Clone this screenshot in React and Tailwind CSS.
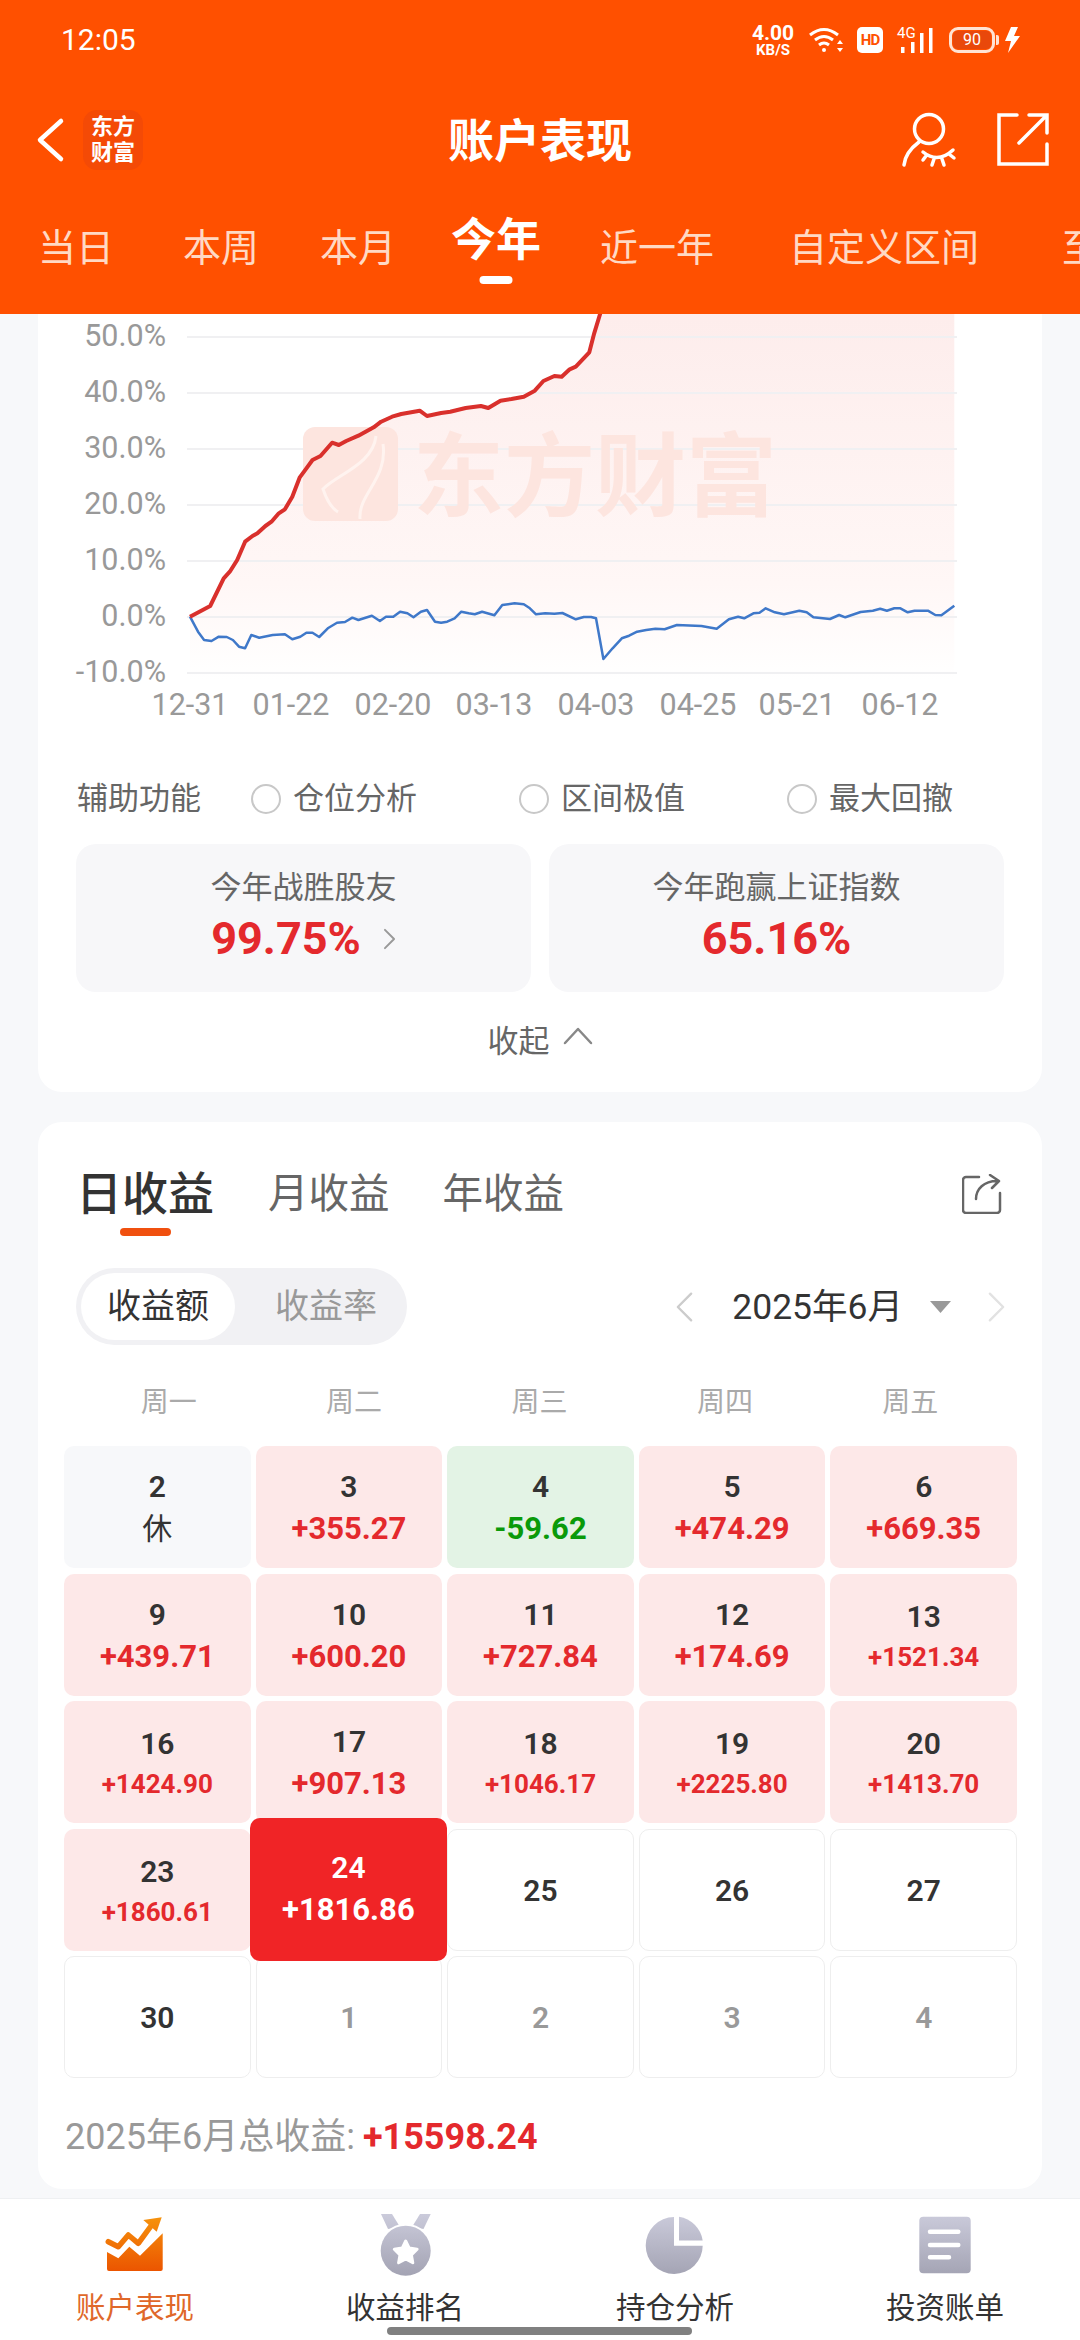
// App.jsx - 账户表现 page
const redPoints = [[245,950],[278,918],[300,835],[310,815],[322,780],[335,725],[347,708],[355,700],[368,678],[378,665],[390,640],[400,628],[412,590],[424,533],[435,505],[445,480],[458,468],[477,428],[488,435],[500,423],[520,407],[545,382],[557,365],[575,350],[590,342],[620,332],[632,348],[655,339],[670,335],[695,324],[720,318],[732,324],[752,302],[770,297],[790,290],[808,272],[822,243],[840,228],[852,230],[865,208],[875,200],[897,157],[905,100],[915,40],[922,-20]]
const bluePoints = [[245,950],[258,995],[268,1020],[280,1023],[292,1010],[305,1011],[315,1020],[325,1040],[335,1045],[345,1005],[358,1013],[380,1005],[400,1003],[412,1018],[425,1010],[435,998],[445,998],[456,1011],[470,985],[485,968],[498,966],[510,953],[520,960],[542,947],[555,963],[565,950],[577,950],[588,935],[600,940],[610,952],[622,935],[632,930],[645,965],[655,968],[665,965],[677,955],[688,935],[700,940],[710,943],[722,935],[742,946],[755,915],[775,910],[790,913],[800,925],[810,943],[825,940],[840,941],[853,939],[875,958],[888,951],[900,951],[908,955],[920,1077],[935,1045],[950,1015],[962,1007],[975,995],[990,990],[1005,986],[1020,988],[1040,975],[1080,978],[1105,986],[1125,958],[1140,950],[1150,955],[1165,940],[1175,938],[1185,925],[1200,937],[1215,943],[1240,932],[1252,937],[1263,952],[1290,957],[1305,945],[1315,952],[1340,936],[1360,932],[1372,926],[1383,932],[1395,925],[1405,925],[1417,937],[1428,932],[1450,932],[1462,945],[1472,946],[1493,917]]

function toChart(points) {
  return points.map(function (p) {
    return (2 + p[0] / 1.633).toFixed(1) + ',' + (p[1] / 3 - 14).toFixed(1)
  }).join(' ')
}

const yLabels = [['50.0%', 23], ['40.0%', 79], ['30.0%', 135], ['20.0%', 191], ['10.0%', 247], ['0.0%', 303], ['-10.0%', 359]]
const xLabels = [['12-31', 152], ['01-22', 253], ['02-20', 355], ['03-13', 456], ['04-03', 558], ['04-25', 660], ['05-21', 759], ['06-12', 862]]

const weeks = [
  [{ d: '2', rest: true }, { d: '3', v: '+355.27' }, { d: '4', v: '-59.62', down: true }, { d: '5', v: '+474.29' }, { d: '6', v: '+669.35' }],
  [{ d: '9', v: '+439.71' }, { d: '10', v: '+600.20' }, { d: '11', v: '+727.84' }, { d: '12', v: '+174.69' }, { d: '13', v: '+1521.34', small: true }],
  [{ d: '16', v: '+1424.90', small: true }, { d: '17', v: '+907.13' }, { d: '18', v: '+1046.17', small: true }, { d: '19', v: '+2225.80', small: true }, { d: '20', v: '+1413.70', small: true }],
  [{ d: '23', v: '+1860.61', small: true }, { d: '24', v: '+1816.86', today: true }, { d: '25' }, { d: '26' }, { d: '27' }],
  [{ d: '30' }, { d: '1', other: true }, { d: '2', other: true }, { d: '3', other: true }, { d: '4', other: true }],
]

function StatusBar() {
  return (
    <div className="h-[80px] pl-[61px] pr-[59px] flex items-center justify-between text-white">
      <span className="text-[30px] leading-none">12:05</span>
      <div className="flex items-center">
        <div className="w-[44px] flex flex-col items-center font-bold">
          <span className="text-[21px] leading-[20px]">4.00</span>
          <span className="text-[15px] leading-[14px]">KB/S</span>
        </div>
        <svg width="36" height="26" viewBox="0 0 36 26" fill="none" stroke="white" strokeWidth="3" className="ml-[14px]">
          <path d="M1 8Q15 -3 29 8M6 13Q15 6 24 13M10 18Q15 14 20 18" />
          <circle cx="15" cy="23" r="2" fill="white" stroke="none" />
          <path d="M28 17L31 13L34 17ZM28 21H34L31 25Z" fill="white" stroke="none" />
        </svg>
        <div className="ml-[12px] w-[26px] h-[26px] rounded-[5px] bg-white flex items-center justify-center text-[#ff5000] text-[15px] font-bold tracking-[-1px]">HD</div>
        <div className="relative ml-[14px] w-[38px] h-[26px]">
          <span className="absolute left-0 top-[-1px] text-[15px] leading-[15px]">4G</span>
          <svg width="38" height="26" viewBox="0 0 38 26" fill="white">
            <rect x="4" y="20" width="3.5" height="6" />
            <rect x="14" y="15" width="3.5" height="11" />
            <rect x="23" y="6" width="3.5" height="20" />
            <rect x="32" y="1" width="3.5" height="25" />
          </svg>
        </div>
        <div className="ml-[14px] w-[46px] h-[26px] rounded-[9px] border-[3px] border-[#ffe3d4] p-[1px]">
          <div className="h-full w-full rounded-[5px] bg-[#e9480b] flex items-center justify-center text-[16px] leading-none">90</div>
        </div>
        <div className="ml-[1px] w-[3px] h-[10px] rounded-r-[2px] bg-[#ffe3d4]"></div>
        <svg width="16" height="26" viewBox="0 0 16 26" fill="white" className="ml-[6px]">
          <polygon points="6,0 0,14 6,14 3,26 15,9 9,9 13,0" />
        </svg>
      </div>
    </div>
  )
}

function TitleBar() {
  return (
    <div className="h-[120px] grid grid-cols-[1fr_auto_1fr] items-center text-white">
      <div className="flex items-center pl-[36px]">
        <svg width="30" height="46" viewBox="0 0 30 46" fill="none" stroke="white" strokeWidth="4.5" strokeLinecap="round" strokeLinejoin="round">
          <path d="M25 4L4 23L25 42" />
        </svg>
        <div className="ml-[17px] w-[60px] h-[60px] rounded-[14px] bg-[#f44a06] flex items-center justify-center text-center text-[22px] leading-[26px] font-bold">
          东方<br />财富
        </div>
      </div>
      <div className="mt-[2px] text-[46px] leading-none font-bold">账户表现</div>
      <div className="flex items-center justify-end pr-[29px]">
        <svg width="58" height="60" viewBox="0 0 58 60" fill="none" stroke="white" strokeWidth="3.5" strokeLinecap="round">
          <circle cx="28" cy="19" r="14.5" />
          <path d="M3 55C4 45 10 38 18 32M22 42Q37 54 52 40M25 46L22 50M33 49L31 55M41 49L43 55M48 44L53 48" />
        </svg>
        <svg width="55" height="58" viewBox="0 0 55 58" fill="none" stroke="white" strokeWidth="3.5" strokeLinecap="round" className="ml-[37px]">
          <path d="M21 4H3V53H51V33M23 32L51 4M33 4H51V22" />
        </svg>
      </div>
    </div>
  )
}

function RangeTabs() {
  return (
    <div className="h-[96px] pl-[38px] flex items-center whitespace-nowrap overflow-hidden text-[38px] leading-none text-[#ffd9c4]">
      <span>当日</span>
      <span className="ml-[69px]">本周</span>
      <span className="ml-[61px]">本月</span>
      <span className="relative ml-[55px] mt-[-16px] text-[45px] font-bold text-white">
        今年
        <span className="absolute left-1/2 -translate-x-1/2 bottom-[-21px] w-[33px] h-[8px] rounded-full bg-white"></span>
      </span>
      <span className="ml-[59px]">近一年</span>
      <span className="ml-[75px]">自定义区间</span>
      <span className="ml-[83px]">至今</span>
    </div>
  )
}

function Chart() {
  return (
    <svg width="1004" height="416" viewBox="0 0 1004 416" className="block text-[30.5px]">
      <defs>
        <linearGradient id="areaFill" x1="0" y1="0" x2="0" y2="1">
          <stop offset="0" stopColor="#fdeceb" />
          <stop offset="0.75" stopColor="#fff7f6" />
          <stop offset="1" stopColor="#ffffff" />
        </linearGradient>
      </defs>
      <polygon points={toChart(redPoints) + ' ' + toChart([[1493, -20], [1493, 1140], [245, 1140]])} fill="url(#areaFill)" />
      {yLabels.map(function (l) {
        return <line key={l[0]} x1="149" x2="919" y1={l[1]} y2={l[1]} stroke="#f0f0f2" strokeWidth="2" />
      })}
      <rect x="265" y="113" width="95" height="94" rx="12" fill="#fde5df" />
      <path d="M338 122C335 150 300 160 285 175C290 190 295 195 300 198M345 130C350 165 320 180 322 205" fill="none" stroke="#fff3ef" strokeWidth="3" />
      <text x="375" y="195" className="fill-[#fde5df] text-[91px] font-bold">东方财富</text>
      <polyline points={toChart(bluePoints)} fill="none" stroke="#3f78c9" strokeWidth="2.5" strokeLinejoin="round" />
      <polyline points={toChart(redPoints)} fill="none" stroke="#d9302c" strokeWidth="4" strokeLinejoin="round" />
      {yLabels.map(function (l) {
        return <text key={l[0]} x="128" y={l[1] + 9} textAnchor="end" className="fill-[#999999]">{l[0]}</text>
      })}
      {xLabels.map(function (l) {
        return <text key={l[0]} x={l[1]} y="401" textAnchor="middle" className="fill-[#999999]">{l[0]}</text>
      })}
    </svg>
  )
}

function Radio(props) {
  return (
    <div className="w-[268px] flex items-center">
      <span className="w-[30px] h-[30px] rounded-full border-2 border-[#c8c8c8]"></span>
      <span className="ml-[12px]">{props.label}</span>
    </div>
  )
}

function Chevron(props) {
  return (
    <svg width={props.w} height={props.h} viewBox="0 0 20 32" fill="none" stroke={props.color} strokeWidth={props.sw} strokeLinejoin="round" strokeLinecap="round" className={props.className}>
      <path d={props.right ? 'M3 2L17 16L3 30' : 'M17 2L3 16L17 30'} />
    </svg>
  )
}

function ChartCard() {
  return (
    <div className="mx-[38px] h-[778px] bg-white rounded-b-[24px] overflow-hidden">
      <Chart />
      <div className="mt-[49px] h-[40px] pl-[39px] flex items-center text-[31px] leading-[40px] text-[#666666]">
        <span className="w-[174px]">辅助功能</span>
        <Radio label="仓位分析" />
        <Radio label="区间极值" />
        <div className="flex items-center">
          <span className="w-[30px] h-[30px] rounded-full border-2 border-[#c8c8c8]"></span>
          <span className="ml-[12px]">最大回撤</span>
        </div>
      </div>
      <div className="mt-[25px] px-[38px] grid grid-cols-2 gap-[18px]">
        <div className="h-[148px] pt-[23px] rounded-[20px] bg-[#f7f7f9] flex flex-col items-center">
          <div className="text-[31px] leading-[42px] text-[#666666]">今年战胜股友</div>
          <div className="mt-[5px] flex items-center">
            <span className="text-[45px] leading-[50px] font-bold text-[#e4292d]">99.75%</span>
            <Chevron right w="13" h="22" color="#999999" sw="3" className="ml-[22px]" />
          </div>
        </div>
        <div className="h-[148px] pt-[23px] rounded-[20px] bg-[#f7f7f9] flex flex-col items-center">
          <div className="text-[31px] leading-[42px] text-[#666666]">今年跑赢上证指数</div>
          <div className="mt-[5px] text-[45px] leading-[50px] font-bold text-[#e4292d]">65.16%</div>
        </div>
      </div>
      <div className="mt-[30px] h-[40px] flex items-center justify-center text-[31px] text-[#666666]">
        <span>收起</span>
        <svg width="30" height="20" viewBox="0 0 30 20" fill="none" stroke="#888888" strokeWidth="2.5" strokeLinecap="round" strokeLinejoin="round" className="ml-[13px] mt-[-12px]">
          <path d="M2 17L15 3L28 17" />
        </svg>
      </div>
    </div>
  )
}

function DayCell(props) {
  const c = props.cell
  if (c.today) {
    return (
      <div className="relative">
        <div className="absolute left-[-6px] right-[-5px] top-[-11px] bottom-[-10px] z-10 rounded-[10px] bg-[#f02426] flex flex-col items-center justify-center text-white font-bold">
          <span className="text-[30px] leading-[42px] font-semibold">{c.d}</span>
          <span className="text-[31px] leading-[42px]">{c.v}</span>
        </div>
      </div>
    )
  }
  let cellClass = 'border border-[#eeeeee] bg-white'
  if (c.rest) cellClass = 'bg-[#f7f8fa]'
  else if (c.down) cellClass = 'bg-[#e3f3e5]'
  else if (c.v) cellClass = 'bg-[#fde8e8]'
  return (
    <div className={'h-[122px] pt-[2px] rounded-[10px] flex flex-col items-center justify-center ' + cellClass}>
      <span className={'text-[30px] leading-[42px] font-semibold ' + (c.other ? 'text-[#999999]' : 'text-[#333333]')}>{c.d}</span>
      {c.rest && <span className="text-[30px] leading-[42px] text-[#333333]">休</span>}
      {c.v && (
        <span className={c.small
          ? 'text-[26px] leading-[38px] font-bold text-[#e4292d]'
          : 'text-[31px] leading-[42px] font-bold ' + (c.down ? 'text-[#0a9a0a]' : 'text-[#e4292d]')}>
          {c.v}
        </span>
      )}
    </div>
  )
}

function EarningsCard() {
  return (
    <div className="mx-[38px] mt-[30px] h-[1067px] bg-white rounded-[24px] overflow-hidden">
      <div className="mt-[50px] h-[44px] pl-[38px] pr-[37px] flex items-center">
        <span className="relative text-[46px] leading-none font-medium text-[#333333]">
          日收益
          <span className="absolute left-[44px] bottom-[-19px] w-[51px] h-[8px] rounded-full bg-[#f0500f]"></span>
        </span>
        <span className="ml-[54px] text-[40.5px] leading-none text-[#666666]">月收益</span>
        <span className="ml-[53px] text-[40.5px] leading-none text-[#666666]">年收益</span>
        <svg width="40" height="40" viewBox="0 0 40 40" fill="none" stroke="#666666" strokeWidth="2.5" strokeLinecap="round" strokeLinejoin="round" className="ml-auto mr-[3px]">
          <path d="M17 3H4A3 3 0 0 0 1 6V36A3 3 0 0 0 4 39H35A3 3 0 0 0 38 36V19M14 25C14 15 22 7 35 7M28 1L37 7L30 14" />
        </svg>
      </div>
      <div className="mt-[52px] pl-[38px] pr-[36px] flex items-center">
        <div className="w-[331px] h-[77px] p-[5px] rounded-full bg-[#f1f1f4] flex items-center text-[34px]">
          <div className="w-[154px] h-[67px] rounded-full bg-white flex items-center justify-center text-[#333333]">收益额</div>
          <span className="ml-[40px] text-[#999999]">收益率</span>
        </div>
        <Chevron w="19" h="32" color="#cccccc" sw="2.5" className="ml-auto" />
        <span className="ml-[38px] mt-[2px] text-[35.5px] leading-none text-[#333333]">2025年6月</span>
        <svg width="21" height="12" viewBox="0 0 21 12" fill="#999999" className="ml-[27px]">
          <polygon points="0,0 21,0 10.5,12" />
        </svg>
        <Chevron right w="19" h="32" color="#e2e2e2" sw="2.5" className="ml-[36px]" />
      </div>
      <div className="mt-[38px] ml-[38px] w-[927px] grid grid-cols-5 text-center text-[28px] leading-[40px] text-[#aaaaaa]">
        <span>周一</span>
        <span>周二</span>
        <span>周三</span>
        <span>周四</span>
        <span>周五</span>
      </div>
      <div className="mt-[23px] ml-[26px] w-[953px] grid grid-cols-5 gap-x-[5px] gap-y-[5.5px]">
        {weeks.map(function (week) {
          return week.map(function (cell) {
            return <DayCell key={cell.d + (cell.other ? 'o' : '')} cell={cell} />
          })
        })}
      </div>
      <div className="mt-[36px] pl-[27px] flex items-center h-[46px] text-[36px] text-[#999999]">
        <span>2025年6月总收益:</span>
        <span className="ml-[8px] text-[36px] font-bold text-[#e4292d]">+15598.24</span>
      </div>
    </div>
  )
}

function BottomNav() {
  return (
    <div className="relative mt-[9px] h-[142px] border-t border-[#eef0f2] bg-white grid grid-cols-4 pt-[13px] text-[29.5px] leading-[40px] text-[#333333]">
      <div className="flex flex-col items-center">
        <svg width="60" height="66" viewBox="0 0 60 66">
          <defs>
            <linearGradient id="navOrange2" gradientUnits="userSpaceOnUse" x1="0" y1="5" x2="0" y2="59">
              <stop offset="0" stopColor="#f6920c" />
              <stop offset="1" stopColor="#eb5500" />
            </linearGradient>
          </defs>
          <path d="M2 40L13.3 46.3L24.3 34.7L35 43.7L57.7 21.3V57A2 2 0 0 1 55.7 59H4A2 2 0 0 1 2 57Z" fill="url(#navOrange2)" />
          <polyline points="3.3,29.7 13.3,34.7 23.3,23 33.3,31.3 46.7,13" fill="none" stroke="url(#navOrange2)" strokeWidth="5.5" strokeLinejoin="round" strokeLinecap="round" />
          <polygon points="56.7,5.3 38.3,8 51.7,19.7" fill="url(#navOrange2)" />
        </svg>
        <span className="mt-[10px] text-[#e0682a]">账户表现</span>
      </div>
      <div className="flex flex-col items-center">
        <svg width="60" height="66" viewBox="0 0 60 66">
          <defs>
            <linearGradient id="navGrey" gradientUnits="userSpaceOnUse" x1="0" y1="2" x2="0" y2="64">
              <stop offset="0" stopColor="#cbcbdb" />
              <stop offset="1" stopColor="#a3a3b3" />
            </linearGradient>
          </defs>
          <polygon points="6,2 17,2 25,15 13,17" fill="url(#navGrey)" />
          <polygon points="55.7,2 45,2 37,15 48.5,17" fill="url(#navGrey)" />
          <circle cx="30.7" cy="38.7" r="27" fill="white" />
          <circle cx="30.7" cy="38.7" r="25" fill="url(#navGrey)" />
          <polygon points="30.7,29 34.2,36.1 42.1,37.3 36.4,42.9 37.8,50.7 30.7,47 23.6,50.7 25,42.9 19.3,37.3 27.2,36.1" fill="white" stroke="white" strokeWidth="3" strokeLinejoin="round" />
        </svg>
        <span className="mt-[10px]">收益排名</span>
      </div>
      <div className="flex flex-col items-center">
        <svg width="60" height="66" viewBox="0 0 60 66" fill="url(#navGrey)">
          <path d="M29 5V33.7H57.7A28.5 28.5 0 1 1 29 5Z" />
          <path d="M34 4.7A28.5 28.5 0 0 1 57.7 28.5H34Z" />
        </svg>
        <span className="mt-[10px]">持仓分析</span>
      </div>
      <div className="flex flex-col items-center">
        <svg width="60" height="66" viewBox="0 0 60 66">
          <rect x="4.3" y="4.7" width="51.4" height="56.6" rx="4" fill="url(#navGrey)" />
          <path d="M15 19.7H43.3M15 33H43.3M15 45.3H34" stroke="white" strokeWidth="4.5" strokeLinecap="round" />
        </svg>
        <span className="mt-[10px]">投资账单</span>
      </div>
      <div className="absolute left-[387px] bottom-[5px] w-[305px] h-[8px] rounded-full bg-[#808080]"></div>
    </div>
  )
}

export default function App() {
  return (
    <div className="w-[1080px] h-[2340px] overflow-hidden bg-[#f7f8fa] font-[Roboto,'Noto_Sans_CJK_SC',sans-serif]">
      <div className="h-[314px] bg-[#ff5000] overflow-hidden">
        <StatusBar />
        <TitleBar />
        <div className="h-[114px]">
          <RangeTabs />
        </div>
      </div>
      <ChartCard />
      <EarningsCard />
      <BottomNav />
    </div>
  )
}
